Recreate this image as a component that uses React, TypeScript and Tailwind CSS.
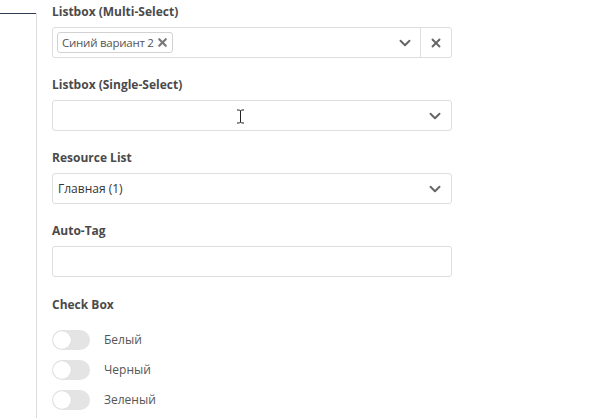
import { ChevronDown, X } from "lucide-react";

const colors = ["Белый", "Черный", "Зеленый"];

const Label = ({ children }: { children: React.ReactNode }) => (
  <div className="mb-[7px] h-4 text-[12px] font-bold leading-4 text-[#4a4a4a]">{children}</div>
);

const Chevron = () => <ChevronDown className="h-[18px] w-[18px] text-[#666]" strokeWidth={2.6} />;

const Toggle = ({ label }: { label: string }) => (
  <div className="flex h-5 items-center gap-[14px]">
    <div className="flex h-5 w-[38px] items-center rounded-full bg-[#e4e4e4] p-px">
      <div className="h-[18px] w-[18px] rounded-full bg-white shadow-[0_0_1px_rgba(0,0,0,0.15)]" />
    </div>
    <span className="text-[12px] text-[#555]">{label}</span>
  </div>
);

export default function App() {
  return (
    <div className="flex h-[418px] w-[614px] bg-white font-['Open_Sans',_sans-serif]">
      {/* left rail */}
      <div className="mt-[13px] flex w-[37px] flex-col border-r border-[#dcdcdc]">
        <div className="h-px w-full bg-[#2f3b52]" />
      </div>

      <div className="flex w-[415px] flex-col gap-[19px] pl-[15px] pt-[4px]">
        <div>
          <Label>Listbox (Multi-Select)</Label>
          <div className="flex h-[31px] items-center rounded-[3px] border border-[#dedede]">
            <div className="flex flex-1 items-center pl-[4px]">
              <span className="flex h-[21px] items-center gap-[2px] rounded-[3px] border border-[#d2d2d2] pl-[4px] pr-[3px] text-[11.5px] tracking-[-0.25px] text-[#555]">
                Синий вариант 2
                <X className="h-[13px] w-[13px] text-[#777]" strokeWidth={4} />
              </span>
            </div>
            <div className="flex h-full w-[31px] items-center justify-center">
              <Chevron />
            </div>
            <div className="flex h-full w-[31px] items-center justify-center border-l border-[#dedede]">
              <X className="h-[14px] w-[14px] text-[#666]" strokeWidth={3.2} />
            </div>
          </div>
        </div>

        <div>
          <Label>Listbox (Single-Select)</Label>
          <div className="relative flex h-[31px] items-center justify-end rounded-[3px] border border-[#dedede] pr-[7px]">
            <Chevron />
            {/* mouse cursor */}
            <svg className="absolute left-[183px] top-[8px]" width="9" height="15" viewBox="0 0 9 15">
              <path d="M1 1h2.5l1 1 1-1H8M4.5 2v11M1 14h2.5l1-1 1 1H8" fill="none" stroke="#222" strokeWidth="1" />
            </svg>
          </div>
        </div>

        <div>
          <Label>Resource List</Label>
          <div className="flex h-[31px] items-center justify-between rounded-[3px] border border-[#dedede] pl-[5px] pr-[7px]">
            <span className="text-[12px] text-[#333]">Главная (1)</span>
            <Chevron />
          </div>
        </div>

        <div>
          <Label>Auto-Tag</Label>
          <div className="h-[31px] rounded-[3px] border border-[#dedede]" />
        </div>

        <div className="pt-px">
          <div className="mb-[17px] h-4 text-[12px] font-bold leading-4 text-[#4a4a4a]">Check Box</div>
          <div className="flex flex-col gap-[10px]">
            {colors.map((c) => (
              <Toggle key={c} label={c} />
            ))}
          </div>
        </div>
      </div>
    </div>
  );
}
